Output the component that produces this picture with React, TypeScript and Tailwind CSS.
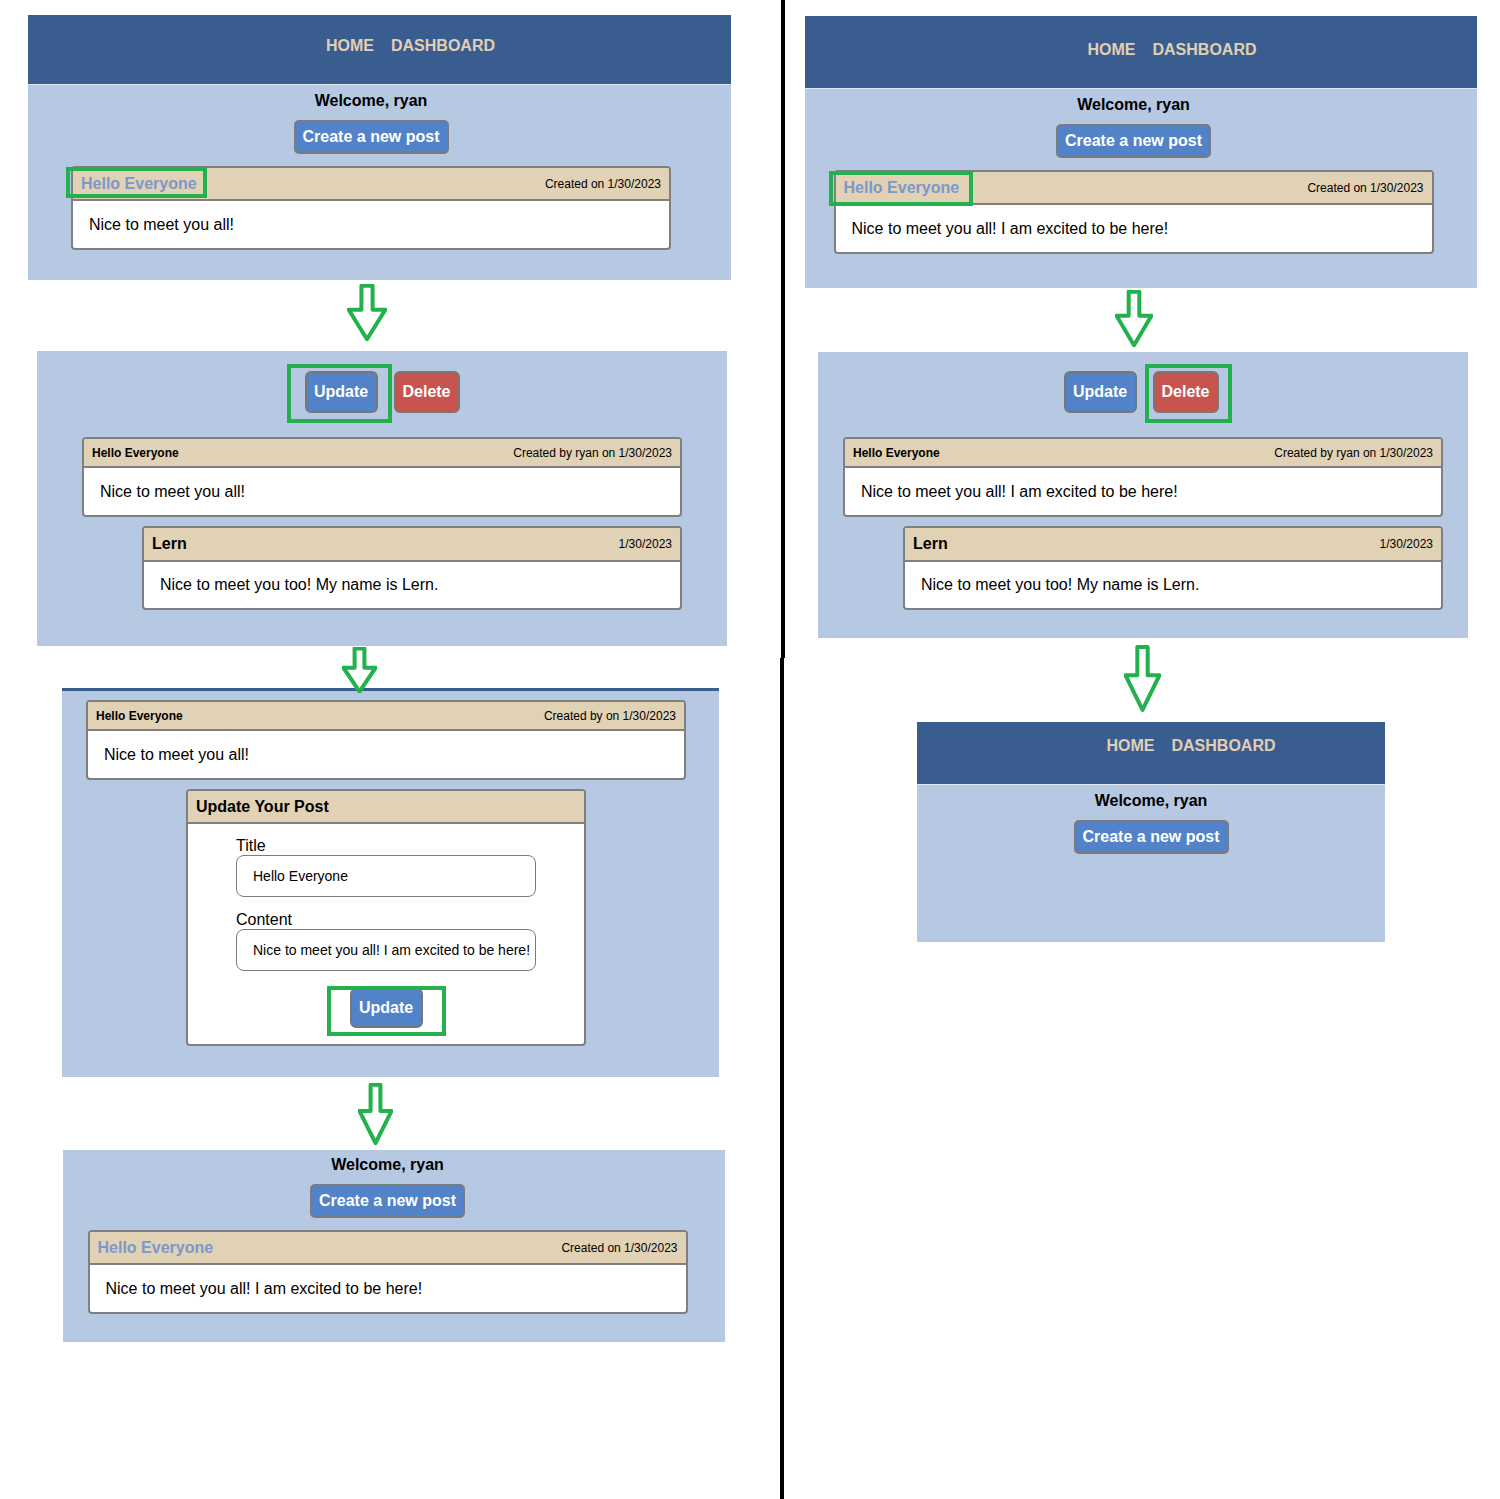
import React from "react";

function Arrow({ className }: { className: string }) {
  return (
    <svg className={`absolute ${className}`} viewBox="0 0 100 100" preserveAspectRatio="none">
      <polygon
        points="36,3 64,3 64,45 96,45 50,97 4,45 36,45"
        fill="none"
        stroke="#22b14c"
        strokeWidth={4}
        strokeLinejoin="round"
        vectorEffect="non-scaling-stroke"
      />
    </svg>
  );
}

function Highlight({ className }: { className: string }) {
  return <div className={`absolute border-4 border-[#22b14c] pointer-events-none ${className}`} />;
}

function Nav({ className }: { className: string }) {
  return (
    <nav
      className={`bg-[#3a5d8f] border-b border-[#dfe7f2] flex justify-center gap-[17px] text-[16px] leading-[20px] font-bold text-[#e2cfb3] ${className}`}
    >
      <span>HOME</span>
      <span>DASHBOARD</span>
    </nav>
  );
}

function Welcome({ className = "" }: { className?: string }) {
  return (
    <>
      <p className={`text-[16px] leading-[20px] font-bold text-black ${className}`}>Welcome, ryan</p>
      <button className="mt-[9px] h-[34px] w-[155px] border-2 border-[#7b7b7b] rounded-[5px] bg-[#5283c8] text-white font-bold text-[16px]">
        Create a new post
      </button>
    </>
  );
}

function HomeCard({ body, box }: { body: string; box?: string }) {
  return (
    <div className="relative mt-[12px] w-[600px] border-2 border-[#7f7f7f] rounded-[4px] bg-white">
      <div className="h-[33px] bg-[#e1d1b5] border-b-2 border-[#7f7f7f] rounded-t-[2px] flex items-center justify-between px-[8px]">
        <span className="text-[16px] font-bold text-[#7b98cb]">Hello Everyone</span>
        <span className="text-[12px] text-black">Created on 1/30/2023</span>
      </div>
      <div className="h-[47px] flex items-center px-[16px] text-[16px] text-black">{body}</div>
      {box && <Highlight className={box} />}
    </div>
  );
}

function Thread({ body, by, className = "" }: { body: string; by: string; className?: string }) {
  return (
    <div className={`w-[600px] flex flex-col ${className}`}>
      <div className="border-2 border-[#7f7f7f] rounded-[4px] bg-white">
        <div className="h-[29px] bg-[#e1d1b5] border-b-2 border-[#7f7f7f] rounded-t-[2px] flex items-center justify-between px-[8px] text-[12px] text-black">
          <span className="font-bold">Hello Everyone</span>
          <span>{by}</span>
        </div>
        <div className="h-[47px] flex items-center px-[16px] text-[16px] text-black">{body}</div>
      </div>
    </div>
  );
}

function Reply() {
  return (
    <div className="self-end mt-[9px] w-[540px] border-2 border-[#7f7f7f] rounded-[4px] bg-white">
      <div className="h-[34px] bg-[#e1d1b5] border-b-2 border-[#7f7f7f] rounded-t-[2px] flex items-center justify-between px-[8px] text-black">
        <span className="text-[16px] font-bold">Lern</span>
        <span className="text-[12px]">1/30/2023</span>
      </div>
      <div className="h-[46px] flex items-center px-[16px] text-[16px] text-black">
        Nice to meet you too! My name is Lern.
      </div>
    </div>
  );
}

function Actions({ mark, className = "" }: { mark: "update" | "delete"; className?: string }) {
  return (
    <div className={`flex gap-[16px] ${className}`}>
      <button className="relative h-[42px] w-[73px] border-2 border-[#777777] rounded-[6px] bg-[#5283c8] text-white font-bold text-[16px]">
        Update
        {mark === "update" && <Highlight className="-left-[20px] -top-[9px] w-[105px] h-[59px]" />}
      </button>
      <button className="relative h-[42px] w-[66px] border-2 border-[#777777] rounded-[6px] bg-[#c85450] text-white font-bold text-[16px]">
        Delete
        {mark === "delete" && <Highlight className="-left-[10px] -top-[9px] w-[87px] h-[59px]" />}
      </button>
    </div>
  );
}

export default function App() {
  const first = "Nice to meet you all!";
  const second = "Nice to meet you all! I am excited to be here!";
  return (
    <div className="relative w-[1500px] h-[1499px] bg-white overflow-hidden font-['Liberation_Sans',Arial,sans-serif]">
      {/* left column */}
      <section className="absolute left-[28px] top-[15px] w-[703px] h-[265px] bg-[#b6c8e2]">
        <Nav className="h-[70px] pt-[21px] pl-[62px]" />
        <div className="w-[686px] flex flex-col items-center">
          <Welcome className="mt-[6px]" />
          <HomeCard body={first} box="-left-[7px] top-[-1px] w-[141px] h-[31px]" />
        </div>
      </section>

      <section className="absolute left-[37px] top-[351px] w-[690px] h-[295px] bg-[#b6c8e2] flex flex-col items-center pt-[20px]">
        <Actions mark="update" />
        <Thread className="mt-[24px]" by="Created by ryan on 1/30/2023" body={first} />
        <div className="w-[600px] flex flex-col">
          <Reply />
        </div>
      </section>

      <section className="absolute left-[62px] top-[688px] w-[657px] h-[389px] bg-[#b6c8e2] border-t-[3px] border-[#3a5d8f]">
        <div className="w-[648px] flex flex-col items-center">
          <Thread className="mt-[9px]" by="Created by on 1/30/2023" body={first} />
          <div className="mt-[9px] w-[400px] border-2 border-[#7f7f7f] rounded-[4px] bg-white">
            <div className="h-[33px] bg-[#e1d1b5] border-b-2 border-[#7f7f7f] rounded-t-[2px] flex items-center px-[8px] text-[16px] font-bold text-black">
              Update Your Post
            </div>
            <div className="flex flex-col items-center pt-[13px] pb-[16px]">
              <div className="w-[300px] flex flex-col text-black">
                <label className="text-[16px] leading-[18px]">Title</label>
                <input
                  readOnly
                  value="Hello Everyone"
                  className="h-[42px] w-full border border-[#7b7b7b] rounded-[8px] pl-[16px] text-[14px] text-black bg-white"
                />
                <label className="mt-[14px] text-[16px] leading-[18px]">Content</label>
                <input
                  readOnly
                  value={second}
                  className="h-[42px] w-full border border-[#7b7b7b] rounded-[8px] pl-[16px] text-[14px] text-black bg-white"
                />
              </div>
              <button className="relative mt-[17px] h-[40px] w-[73px] border-2 border-[#777777] rounded-[6px] bg-[#5283c8] text-white font-bold text-[16px]">
                Update
                <Highlight className="-left-[25px] -top-[4px] w-[119px] h-[50px]" />
              </button>
            </div>
          </div>
        </div>
      </section>

      <section className="absolute left-[63px] top-[1150px] w-[662px] h-[192px] bg-[#b6c8e2]">
        <div className="w-[649px] flex flex-col items-center pt-[5px]">
          <Welcome />
          <HomeCard body={second} />
        </div>
      </section>

      {/* divider */}
      <div className="absolute left-[781px] top-0 w-[4px] h-[658px] bg-black" />
      <div className="absolute left-[780px] top-[658px] w-[4px] h-[841px] bg-black" />

      {/* right column */}
      <section className="absolute left-[805px] top-[16px] w-[672px] h-[272px] bg-[#b6c8e2]">
        <Nav className="h-[73px] pt-[24px] pl-[62px]" />
        <div className="w-[657px] flex flex-col items-center">
          <Welcome className="mt-[6px]" />
          <HomeCard body={second} box="-left-[7px] top-[-1px] w-[144px] h-[35px]" />
        </div>
      </section>

      <section className="absolute left-[818px] top-[352px] w-[650px] h-[286px] bg-[#b6c8e2] flex flex-col items-center pt-[19px]">
        <Actions mark="delete" className="mr-[4px]" />
        <Thread className="mt-[24px]" by="Created by ryan on 1/30/2023" body={second} />
        <div className="w-[600px] flex flex-col">
          <Reply />
        </div>
      </section>

      <section className="absolute left-[917px] top-[722px] w-[468px] h-[220px] bg-[#b6c8e2]">
        <Nav className="h-[63px] pt-[14px] pl-[80px]" />
        <div className="flex flex-col items-center">
          <Welcome className="mt-[6px]" />
        </div>
      </section>

      {/* arrows */}
      <Arrow className="left-[347px] top-[284px] w-[40px] h-[57px]" />
      <Arrow className="left-[342px] top-[647px] w-[35px] h-[46px]" />
      <Arrow className="left-[358px] top-[1083px] w-[35px] h-[62px]" />
      <Arrow className="left-[1115px] top-[290px] w-[38px] h-[57px]" />
      <Arrow className="left-[1124px] top-[645px] w-[37px] h-[67px]" />
    </div>
  );
}
